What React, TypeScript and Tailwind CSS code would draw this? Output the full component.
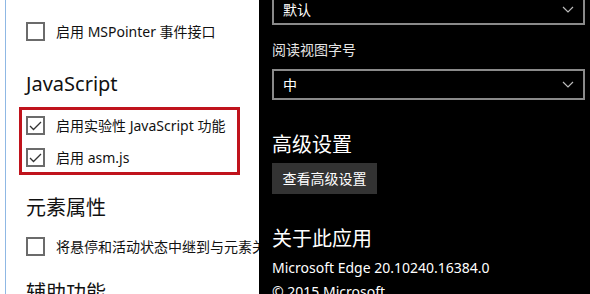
import { ReactNode } from "react";

const font = { fontFamily: '"Noto Sans", "Noto Sans CJK SC", sans-serif' };

const Check = ({ checked }: { checked?: boolean }) => (
    <div className="w-[19px] h-[19px] border-2 border-[#6b6b6b] flex items-center justify-center shrink-0">
        {checked && (
            <svg width="13" height="10" viewBox="0 0 13 10" fill="none">
                <path d="M1 5 L4.5 8.5 L12 1" stroke="#333" strokeWidth="1.3" />
            </svg>
        )}
    </div>
);

const CheckRow = ({ label, checked }: { label: string; checked?: boolean }) => (
    <div className="flex items-center gap-[11px] h-[19px] whitespace-nowrap">
        <Check checked={checked} />
        <span className="text-[14px] text-[#111]">{label}</span>
    </div>
);

const Heading = ({ children, dark }: { children: ReactNode; dark?: boolean }) => (
    <div className={`text-[20px] leading-[28px] whitespace-nowrap ${dark ? "text-white" : "text-[#111]"}`}>{children}</div>
);

const Select = ({ value }: { value: string }) => (
    <div className="h-[31px] border-2 border-[#8a8a8a] flex items-center justify-between pl-[9px] pr-[9px]">
        <span className="text-[14px] text-white">{value}</span>
        <svg width="12" height="7" viewBox="0 0 12 7" fill="none">
            <path d="M1 1 L6 6 L11 1" stroke="#bbb" strokeWidth="1.2" />
        </svg>
    </div>
);

export default function App() {
    return (
        <div className="w-[590px] h-[294px] flex overflow-hidden bg-white" style={font}>
            <div className="w-[259px] h-full pl-[5px] overflow-hidden shrink-0">
                <div className="h-full border-l border-[#8fb8e4] pl-[20px] pt-[22px]">
                    <CheckRow label="启用 MSPointer 事件接口" />
                    <div className="mt-[29px]">
                        <Heading>JavaScript</Heading>
                    </div>
                    <div className="mt-[9px] -ml-[7px] w-[221px] border-[3px] border-[#c0131c] pl-[4px] pt-[6px] pb-[5px] flex flex-col gap-[13px]">
                        <CheckRow label="启用实验性 JavaScript 功能" checked />
                        <CheckRow label="启用 asm.js" checked />
                    </div>
                    <div className="mt-[19px]">
                        <Heading>元素属性</Heading>
                    </div>
                    <div className="mt-[15px]">
                        <CheckRow label="将悬停和活动状态中继到与元素关联的标签" />
                    </div>
                    <div className="mt-[23px]">
                        <Heading>辅助功能</Heading>
                    </div>
                </div>
            </div>
            <div className="flex-1 h-full bg-black pl-[13px] pr-[5px] overflow-hidden">
                <div className="-mt-[6px]">
                    <Select value="默认" />
                </div>
                <div className="mt-[15px] text-[14px] leading-[20px] text-[#e5e5e5]">阅读视图字号</div>
                <div className="mt-[9px]">
                    <Select value="中" />
                </div>
                <div className="mt-[31px]">
                    <Heading dark>高级设置</Heading>
                </div>
                <div className="mt-[4px] w-[105px] h-[31px] bg-[#333] flex items-center justify-center text-[14px] text-white">
                    查看高级设置
                </div>
                <div className="mt-[31px]">
                    <Heading dark>关于此应用</Heading>
                </div>
                <div className="mt-[5px] text-[14px] leading-[20px] text-white whitespace-nowrap">Microsoft Edge 20.10240.16384.0</div>
                <div className="mt-[4px] text-[14px] leading-[20px] text-white whitespace-nowrap">© 2015 Microsoft</div>
            </div>
        </div>
    );
}
